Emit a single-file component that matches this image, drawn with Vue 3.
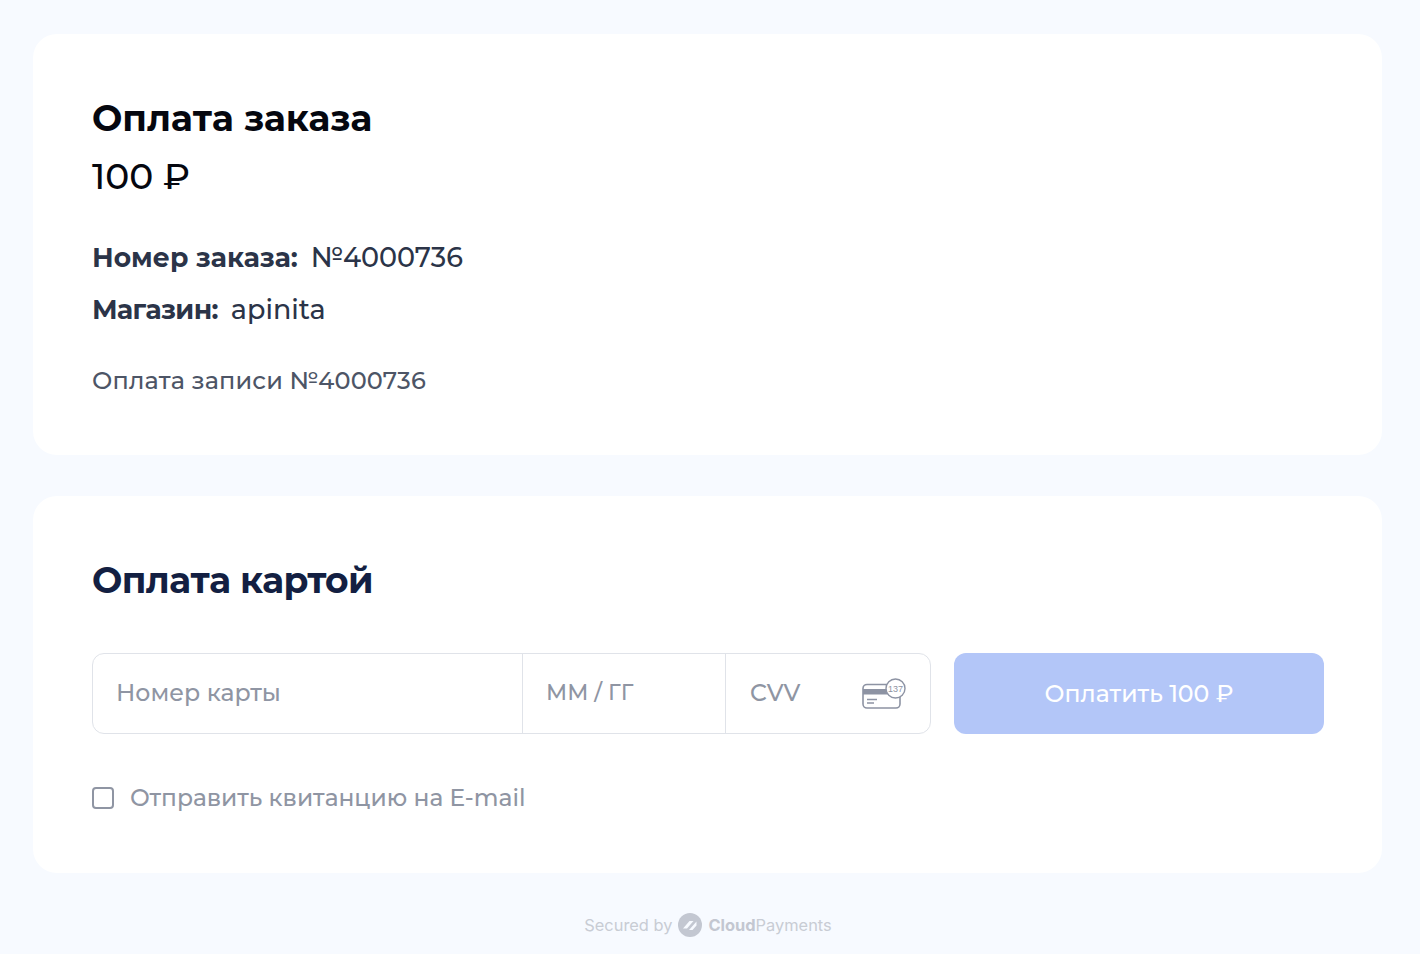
<template>
  <div class="page">
    <section class="card order">
      <h1 class="order__title">Оплата заказа</h1>
      <div class="order__amount">100 ₽</div>
      <div class="order__row"><b>Номер заказа:</b><span>№4000736</span></div>
      <div class="order__row order__row--shop"><b>Магазин:</b><span>apinita</span></div>
      <p class="order__desc">Оплата записи №4000736</p>
    </section>

    <section class="card pay">
      <h2 class="pay__title">Оплата картой</h2>
      <div class="pay__form">
        <div class="fields">
          <div class="field field--number">Номер карты</div>
          <div class="field field--date">ММ / ГГ</div>
          <div class="field field--cvv">
            <span>CVV</span>
            <svg class="cvv-icon" width="46" height="32" viewBox="0 0 46 32" fill="none" aria-hidden="true">
              <rect x="1" y="6.5" width="37" height="23.5" rx="4" fill="#fff" stroke="#8d93a3" stroke-width="1.6" />
              <rect x="1" y="11" width="37" height="5.5" fill="#8d93a3" />
              <path d="M5 21.5h10M5 25h7" stroke="#8d93a3" stroke-width="1.4" />
              <circle cx="33.5" cy="10.5" r="9.5" fill="#fff" stroke="#8d93a3" stroke-width="1.4" />
              <text x="33.5" y="13.6" text-anchor="middle" class="cvv-icon__text">137</text>
            </svg>
          </div>
        </div>
        <button type="button" class="pay__btn">Оплатить 100 ₽</button>
      </div>
      <label class="receipt">
        <span class="receipt__box"></span>
        <span>Отправить квитанцию на E-mail</span>
      </label>
    </section>

    <footer class="footer">
      <span>Secured by</span>
      <svg class="footer__logo" width="24" height="24" viewBox="0 0 24 24" aria-hidden="true">
        <circle cx="12" cy="12" r="12" fill="#c3c7d1" />
        <path d="M5 15.5l6.500-7.500h4l-6.500 7.500zM11 17l7.500-8.500v4l-4 4.500z" fill="#f7faff" />
      </svg>
      <span class="footer__brand"><b>Cloud</b>Payments</span>
    </footer>
  </div>
</template>

<script setup>
</script>

<style>
body {
  margin: 0;
  background: #f7faff;
}
</style>

<style scoped>
.page {
  box-sizing: border-box;
  height: 954px;
  padding: 34px 38px 0 33px;
  font-family: "Montserrat", "Open Sans", "Noto Sans", sans-serif;
  overflow: hidden;
}

.card {
  box-sizing: border-box;
  background: #fff;
  border-radius: 24px;
  padding: 0 58px 0 59px;
}

.order {
  height: 421px;
  padding-top: 62px;
}

.order__title {
  margin: 0;
  font-size: 36px;
  line-height: 44px;
  font-weight: 700;
  color: #05070f;
}

.order__amount {
  margin-top: 14px;
  font-size: 36px;
  line-height: 44px;
  font-weight: 500;
  color: #05070f;
}

.order__row {
  display: flex;
  gap: 13px;
  margin-top: 42px;
  font-size: 27px;
  line-height: 36px;
  font-weight: 500;
  color: #2b3448;
}

.order__row b {
  font-size: 26.6px;
  font-weight: 700;
}

.order__row--shop {
  margin-top: 16px;
}

.order__row--shop b {
  letter-spacing: -0.6px;
}

.order__desc {
  margin: 38px 0 0;
  font-size: 24px;
  line-height: 30px;
  font-weight: 500;
  letter-spacing: 0.15px;
  color: #4d5566;
}

.pay {
  height: 377px;
  margin-top: 41px;
  padding-top: 62px;
}

.pay__title {
  margin: 0;
  font-size: 36px;
  line-height: 44px;
  font-weight: 700;
  letter-spacing: -0.55px;
  color: #131f42;
}

.pay__form {
  display: flex;
  gap: 23px;
  margin-top: 51px;
}

.fields {
  display: flex;
  box-sizing: border-box;
  width: 839px;
  height: 81px;
  border: 1px solid #e0e3e9;
  border-radius: 12px;
}

.field {
  display: flex;
  align-items: center;
  box-sizing: border-box;
  padding-bottom: 2px;
  padding-left: 23px;
  font-size: 23.6px;
  font-weight: 500;
  color: #8f95a3;
}

.field--number {
  width: 429px;
}

.field--date {
  width: 203px;
  font-size: 22px;
  border-left: 1px solid #e0e3e9;
}

.field--cvv {
  flex: 1;
  justify-content: space-between;
  padding-left: 24px;
  padding-right: 22px;
  border-left: 1px solid #e0e3e9;
}

.cvv-icon {
  margin-top: 2px;
}

.cvv-icon__text {
  font-family: "Liberation Sans", sans-serif;
  font-size: 9px;
  fill: #8d93a3;
}

.pay__btn {
  width: 370px;
  height: 81px;
  padding: 0;
  border: none;
  border-radius: 12px;
  background: #b3c6f8;
  color: #fff;
  font-family: inherit;
  font-size: 23.6px;
  font-weight: 500;
}

.receipt {
  display: flex;
  align-items: center;
  gap: 16px;
  margin-top: 48px;
  font-size: 23.4px;
  line-height: 32px;
  font-weight: 500;
  color: #8f95a3;
}

.receipt__box {
  box-sizing: border-box;
  width: 22px;
  height: 22px;
  border: 2px solid #8f95a3;
  border-radius: 4px;
}

.footer {
  display: flex;
  align-items: center;
  justify-content: center;
  gap: 6px;
  margin-top: 40px;
  padding-left: 1px;
  font-family: "Inter", sans-serif;
  font-size: 16.4px;
  line-height: 24px;
  color: #c8ccd4;
}

.footer__brand b {
  font-weight: 700;
  color: #c3c7d1;
}
</style>
